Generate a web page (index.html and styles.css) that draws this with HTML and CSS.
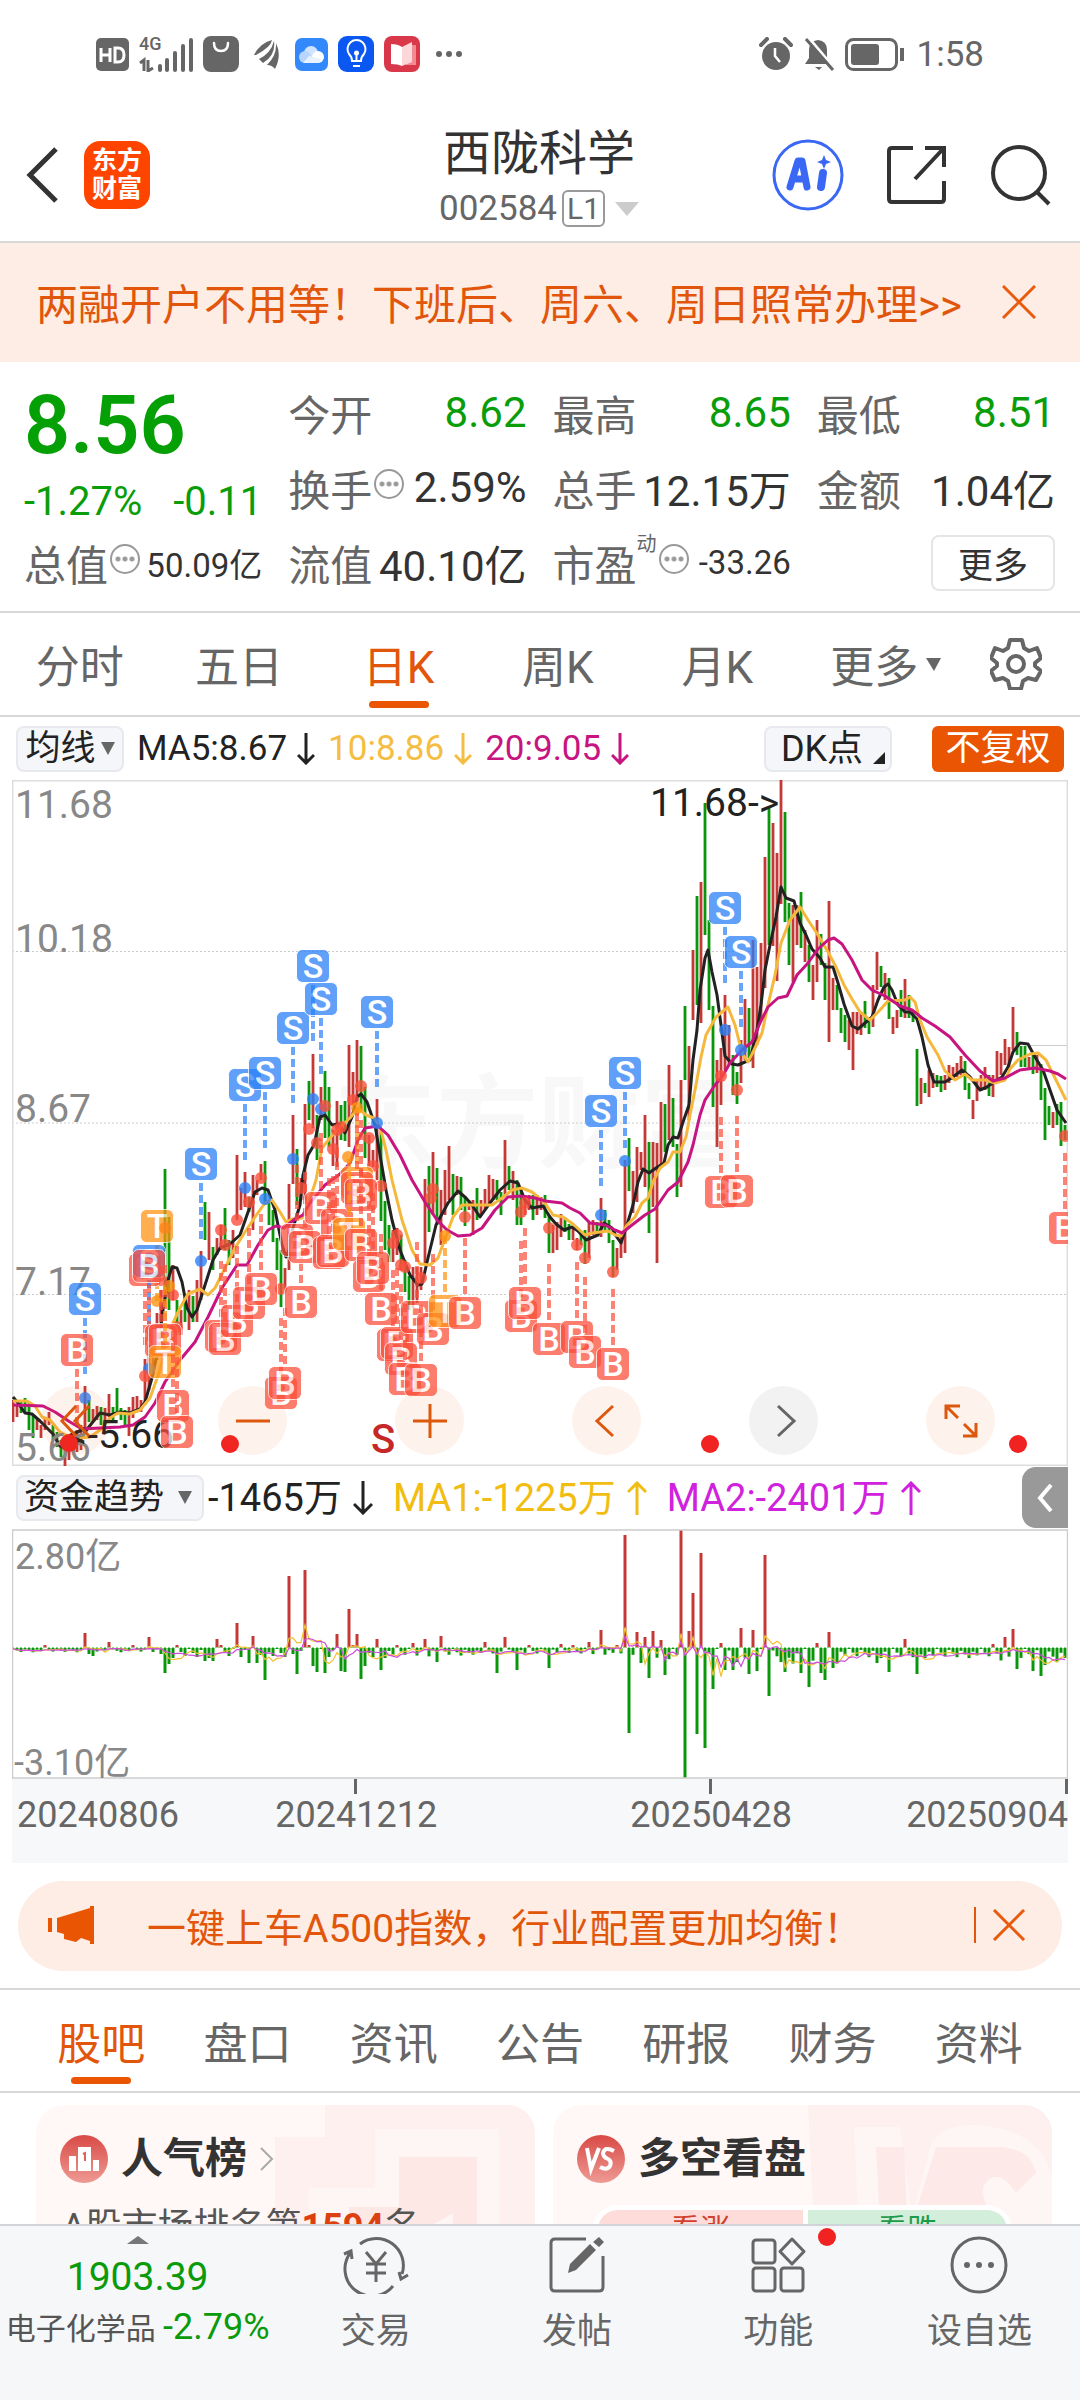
FILE: index.html
```html
<!DOCTYPE html>
<html lang="zh-CN">
<head>
<meta charset="utf-8">
<meta name="viewport" content="width=device-width, initial-scale=1">
<title>西陇科学 002584</title>
<link rel="stylesheet" href="styles.css">
</head>
<body>
<div class="app">
  <div class="status">
    <div class="status-side">
      <svg width="33" height="33" viewBox="0 0 33 33"><rect width="33" height="33" rx="5" fill="#666"/><path d="M5 10v14M14 10v14M5 17h9M19 10v14h3q6 0 6-7t-6-7z" fill="none" stroke="#fff" stroke-width="3"/></svg>
      <div class="signal">
        <span>4G</span>
        <svg width="54" height="34" viewBox="0 0 54 34"><path d="M1 25l4-3v11M9 22v11l5-3" fill="none" stroke="#666" stroke-width="3"/><path d="M21 28v4M28 22v10M36 15v17M44 8v24M52 2v30" stroke="#666" stroke-width="4" stroke-linecap="round"/></svg>
      </div>
      <svg width="36" height="36" viewBox="0 0 36 36"><rect width="36" height="36" rx="8" fill="#666"/><path d="M11 7q0 8 7 8t7-8" fill="none" stroke="#fff" stroke-width="2.5" stroke-linecap="round"/></svg>
      <svg class="gap-l" width="26" height="32" viewBox="0 0 26 32"><path d="M0 17Q6 5 18 2q-1 7-16 15zM5 21q12-6 15-18 2 14-11 22zM13 27Q23 17 22 5q6 12-1 26-3-4-8-4z" fill="#666"/></svg>
      <svg class="gap-l" width="33" height="33" viewBox="0 0 33 33"><rect width="33" height="33" rx="7" fill="#3389fb"/><circle cx="16" cy="15" r="7" fill="#cfe3ff"/><circle cx="10" cy="19" r="6" fill="#b7d5ff"/><circle cx="23" cy="19" r="6" fill="#fff"/><path d="M8 25h16l2-4-12-3z" fill="#e8f2ff"/></svg>
      <svg class="gap-s" width="36" height="36" viewBox="0 0 36 36"><rect width="36" height="36" rx="9" fill="#0a57f2"/><path d="M14 25q0-4-3-7a9 9 0 1 1 15 0q-3 3-3 7zM15 30h7" fill="none" stroke="#fff" stroke-width="2"/><path d="M18.500 18v7" stroke="#fff" stroke-width="2"/><circle cx="18.500" cy="17" r="2.500" fill="#fff"/></svg>
      <svg class="gap-s" width="36" height="36" viewBox="0 0 36 36"><rect width="36" height="36" rx="8" fill="#d9384a"/><path d="M22 9h10v20H22z" fill="#f28a94"/><path d="M7 8q7 0 11 3v19q-4-2-11-2z" fill="#fff"/><path d="M18 11l10-5v20l-10 4z" fill="#fcd7da"/></svg>
      <svg class="gap-l" width="28" height="8" viewBox="0 0 28 8"><g fill="#666"><circle cx="4" cy="4" r="3"/><circle cx="14" cy="4" r="3"/><circle cx="24" cy="4" r="3"/></g></svg>
    </div>
    <div class="status-side">
      <svg width="34" height="34" viewBox="0 0 34 34"><circle cx="17" cy="19" r="14" fill="#666"/><path d="M2 8l6-6M32 8l-6-6" stroke="#666" stroke-width="4" stroke-linecap="round"/><path d="M16 11v8l5 6" fill="none" stroke="#fff" stroke-width="2.500"/></svg>
      <svg class="gap-s" width="32" height="34" viewBox="0 0 32 34"><path d="M2 27l4-6v-8q0-9 9-10 9 1 9 10v8l4 6zM12 30h7l-3 3z" fill="#666"/><path d="M5 0l27 32" stroke="#fff" stroke-width="3"/><path d="M3 2l27 31" stroke="#666" stroke-width="3"/></svg>
      <svg class="gap-s" width="60" height="33" viewBox="0 0 60 33"><rect x="1.500" y="1.500" width="50" height="30" rx="7" fill="none" stroke="#666" stroke-width="3"/><rect x="6" y="6" width="28" height="21" rx="3" fill="#666"/><path d="M57 10v13" stroke="#666" stroke-width="4"/></svg>
      <span class="clock">1:58</span>
    </div>
  </div>

  <header class="top">
    <div class="top-left">
      <button class="icon-btn" aria-label="返回"><svg width="34" height="56" viewBox="0 0 34 56"><path d="M30 2L4 28l26 26" fill="none" stroke="#333" stroke-width="5"/></svg></button>
      <a class="brand" href="#">东方<br>财富</a>
    </div>
    <div class="top-title">
      <h1>西陇科学</h1>
      <div class="code"><span>002584</span><span class="level">L1</span><svg width="24" height="14" viewBox="0 0 24 14"><path d="M0 0h24L12 14z" fill="#ccc"/></svg></div>
    </div>
    <div class="top-right">
      <button class="icon-btn" aria-label="AI"><svg width="72" height="72" viewBox="0 0 72 72"><circle cx="36" cy="36" r="34" fill="none" stroke="#3a68f5" stroke-width="3"/><path d="M18 48l8-26h4l5 26M21 40h11" fill="none" stroke="#3a68f5" stroke-width="7" stroke-linecap="round" stroke-linejoin="round"/><path d="M51 34l-2 14" stroke="#3a68f5" stroke-width="8" stroke-linecap="round"/><path d="M52 16l2 5 5 2-5 2-2 5-2-5-5-2 5-2z" fill="#3a68f5"/></svg></button>
      <button class="icon-btn" aria-label="分享"><svg width="60" height="60" viewBox="0 0 60 60"><path d="M26 3H5q-3 0-3 3v48q0 3 3 3h49q3 0 3-3V36M38 3h19v19M56 4L28 34" fill="none" stroke="#333" stroke-width="4"/></svg></button>
      <button class="icon-btn" aria-label="搜索"><svg width="62" height="62" viewBox="0 0 62 62"><circle cx="29" cy="29" r="26" fill="none" stroke="#333" stroke-width="4"/><path d="M47 48l12 12" stroke="#333" stroke-width="4"/></svg></button>
    </div>
  </header>

  <main class="scroll">
    <div class="notice">
      <a href="#">两融开户不用等！下班后、周六、周日照常办理&gt;&gt;</a>
      <button class="icon-btn" aria-label="关闭"><svg width="34" height="34" viewBox="0 0 34 34"><path d="M1 1l32 32M33 1L1 33" stroke="#e85a0c" stroke-width="3"/></svg></button>
    </div>

    <section class="quote">
      <div class="price">
        <strong>8.56</strong>
        <div class="change"><span>-1.27%</span><span>-0.11</span></div>
      </div>
      <div class="cell"><span class="k">今开</span><span class="v down">8.62</span></div>
      <div class="cell"><span class="k">最高</span><span class="v down">8.65</span></div>
      <div class="cell"><span class="k">最低</span><span class="v down">8.51</span></div>
      <div class="cell"><span class="k">换手<i class="tip"></i></span><span class="v">2.59%</span></div>
      <div class="cell"><span class="k">总手</span><span class="v">12.15万</span></div>
      <div class="cell"><span class="k">金额</span><span class="v">1.04亿</span></div>
      <div class="cell"><span class="k">总值<i class="tip"></i></span><span class="v small">50.09亿</span></div>
      <div class="cell"><span class="k">流值</span><span class="v">40.10亿</span></div>
      <div class="cell"><span class="k">市盈<sup>动</sup><i class="tip"></i></span><span class="v small">-33.26</span></div>
      <div class="cell end"><button class="more">更多</button></div>
    </section>

    <nav class="periods">
      <a href="#">分时</a><a href="#">五日</a><a href="#" class="on">日K</a><a href="#">周K</a><a href="#">月K</a><a href="#" class="drop">更多<svg width="15" height="13" viewBox="0 0 15 13"><path d="M0 0h15L8 13z" fill="#666"/></svg></a>
      <button class="icon-btn" aria-label="设置"><svg width="52" height="52" viewBox="0 0 52 52"><path d="M20 2h12l2 8 5 3 8-3 4 10-6 5v3l6 5-5 9-8-2-5 3-2 8H20l-2-8-5-3-8 2-4-9 6-5v-3l-6-5 4-10 8 3 5-3z" fill="none" stroke="#666" stroke-width="4" stroke-linejoin="round"/><circle cx="26" cy="26" r="8" fill="none" stroke="#666" stroke-width="4"/></svg></button>
    </nav>

    <div class="legend">
      <button class="chip">均线<svg width="14" height="13" viewBox="0 0 14 13"><path d="M0 0h14L7 13z" fill="#666"/></svg></button>
      <span class="ma ink">MA5:8.67<svg width="18" height="32" viewBox="0 0 18 32"><path d="M9 0v30M1 22l8 8 8-8" fill="none" stroke="currentColor" stroke-width="3"/></svg></span>
      <span class="ma gold">10:8.86<svg width="18" height="32" viewBox="0 0 18 32"><path d="M9 0v30M1 22l8 8 8-8" fill="none" stroke="currentColor" stroke-width="3"/></svg></span>
      <span class="ma pink">20:9.05<svg width="18" height="32" viewBox="0 0 18 32"><path d="M9 0v30M1 22l8 8 8-8" fill="none" stroke="currentColor" stroke-width="3"/></svg></span>
      <button class="chip dk">DK点<svg width="12" height="12" viewBox="0 0 12 12"><path d="M12 0v12H0z" fill="#222"/></svg></button>
      <button class="adjust">不复权</button>
    </div>

    <div class="kline">
      <svg id="kline" viewBox="12 780 1056 686" role="img" aria-label="日K线图"></svg>
      <div class="tools">
        <button aria-label="最左"><svg width="34" height="34" viewBox="0 0 34 34"><path d="M17 2L3 17l14 15M30 2L16 17l14 15"/></svg></button>
        <button aria-label="缩小"><svg width="34" height="34" viewBox="0 0 34 34"><path d="M0 17h34"/></svg></button>
        <button aria-label="放大"><svg width="34" height="34" viewBox="0 0 34 34"><path d="M0 17h34M17 0v34"/></svg></button>
        <button aria-label="向左"><svg width="34" height="34" viewBox="0 0 34 34"><path d="M23 2L7 17l16 15"/></svg></button>
        <button aria-label="向右" class="off"><svg width="34" height="34" viewBox="0 0 34 34"><path d="M11 2l16 15-16 15"/></svg></button>
        <button aria-label="全屏"><svg width="34" height="34" viewBox="0 0 34 34"><path d="M2 15V2h14M3 3l11 11M32 19v13H19M31 31L20 20"/></svg></button>
      </div>
    </div>

    <div class="legend flow-legend">
      <button class="chip wide">资金趋势<svg width="14" height="13" viewBox="0 0 14 13"><path d="M0 0h14L7 13z" fill="#666"/></svg></button>
      <span class="ma ink">-1465万<svg width="20" height="34" viewBox="0 0 20 34"><path d="M10 0v32M1 23l9 9 9-9" fill="none" stroke="currentColor" stroke-width="3"/></svg></span>
      <span class="ma amber">MA1:-1225万<svg width="20" height="34" viewBox="0 0 20 34"><path d="M10 34V2M1 11l9-9 9 9" fill="none" stroke="currentColor" stroke-width="3"/></svg></span>
      <span class="ma violet">MA2:-2401万<svg width="20" height="34" viewBox="0 0 20 34"><path d="M10 34V2M1 11l9-9 9 9" fill="none" stroke="currentColor" stroke-width="3"/></svg></span>
      <button class="side" aria-label="展开"><svg width="16" height="28" viewBox="0 0 16 28"><path d="M14 1L3 14l11 13" fill="none" stroke="#fff" stroke-width="4"/></svg></button>
    </div>

    <div class="flow"><svg id="flow" viewBox="12 1528 1056 250" role="img" aria-label="资金趋势图"></svg></div>
    <div class="axis"><span class="first">20240806</span><span class="tick">20241212</span><span class="tick">20250428</span><span class="tick last">20250904</span></div>

    <div class="promo">
      <svg width="48" height="38" viewBox="0 0 48 38"><path d="M0 12h4v14H0zM9 12L42 2V0h4v38h-4v-3l-9-3-5 4-12-3v-5l-7-2z" fill="#ea5504"/></svg>
      <a href="#">一键上车A500指数，行业配置更加均衡！</a>
      <button class="icon-btn" aria-label="关闭"><svg width="34" height="32" viewBox="0 0 34 32"><path d="M2 1l30 30M32 1L2 31" stroke="#e85a0c" stroke-width="3"/></svg></button>
    </div>

    <nav class="sections">
      <a href="#" class="on">股吧</a><a href="#">盘口</a><a href="#">资讯</a><a href="#">公告</a><a href="#">研报</a><a href="#">财务</a><a href="#">资料</a>
    </nav>

    <div class="cards">
      <article class="card">
        <svg class="card-art" width="260" height="200" viewBox="0 0 260 200"><path d="M50 0h210v200H0V32h50z" fill="#fdf0ee"/><path d="M100 24h124v176H34V83h66z" fill="#fef6f4"/><path d="M124 52h78v148h-24v-92l-24 14v78H74v-98h50z" fill="#fde8e5"/></svg>
        <h2><svg width="48" height="48" viewBox="0 0 48 48"><defs><linearGradient id="badge" x2="0" y2="1"><stop stop-color="#d94a46"/><stop offset="1" stop-color="#ee9a94"/></linearGradient></defs><circle cx="24" cy="24" r="24" fill="url(#badge)"/><path d="M9 21h7v15H9zM18 12h13v24H18zM33 25h6v11h-6z" fill="#fff"/><path d="M23 19l2-1v8" fill="none" stroke="#e0605a" stroke-width="2"/></svg>人气榜<svg class="arrow" width="14" height="24" viewBox="0 0 14 24"><path d="M1 1l11 11L1 23" fill="none" stroke="#aaa" stroke-width="2"/></svg></h2>
        <p>A股市场排名第<b>1594</b>名</p>
      </article>
      <article class="card">
        <svg class="card-art" width="244" height="200" viewBox="0 0 244 200"><path d="M0 0h244v200H10z" fill="#fdf0ee"/><path d="M46 22h46l12 90 20-76q20-22 60-14 50 8 60 50v128H54z" fill="#fef6f4"/><path d="M68 42h28l4 90 28-90h60q34 0 40 26l-20 20q-18-28-32-8-6 20 24 44 18 30 10 76h-50l-20-60-20 60H76z" fill="#fdeae8"/></svg>
        <h2><svg width="48" height="48" viewBox="0 0 48 48"><circle cx="24" cy="24" r="24" fill="url(#badge)"/><path d="M10 13l4 21 8-21M37 16q-9-5-11 2 0 4 5 6 4 2 2 7-3 5-10 1" fill="none" stroke="#fff" stroke-width="4"/></svg>多空看盘</h2>
        <div class="vote"><button>看涨</button><button>看跌</button></div>
      </article>
    </div>
  </main>

  <footer class="bottom">
    <a class="sector" href="#">
      <svg width="22" height="8" viewBox="0 0 22 8"><path d="M0 8L11 0l11 8z" fill="#777"/></svg>
      <strong>1903.39</strong>
      <span>电子化学品 <em>-2.79%</em></span>
    </a>
    <a href="#"><svg width="66" height="58" viewBox="0 0 66 58"><path d="M17 8A27 27 0 0 1 59 38M50 50A27 27 0 0 1 8 16M1 18l7-3 1 8M65 39l-7 4-2-7M23 16l10 12 10-12M33 28v18M23 28h20M23 37h20" fill="none" stroke="#666" stroke-width="3"/></svg>交易</a>
    <a href="#"><svg width="58" height="58" viewBox="0 0 58 58"><path d="M38 3H7q-4 0-4 4v44q0 4 4 4h44q4 0 4-4V20" fill="none" stroke="#666" stroke-width="3"/><path d="M20 37l2-9 20-20 6 6-20 20zM45 6l6-5 5 5-5 5z" fill="#666"/></svg>发帖</a>
    <a href="#" class="dot"><svg width="58" height="58" viewBox="0 0 58 58"><g fill="none" stroke="#666" stroke-width="3"><rect x="4" y="4" width="22" height="23" rx="3"/><rect x="4" y="32" width="22" height="23" rx="3"/><rect x="32" y="32" width="22" height="23" rx="3"/><path d="M43 3l12 12.500L43 28 31 15.500z" stroke-linejoin="round"/></g></svg>功能</a>
    <a href="#"><svg width="58" height="58" viewBox="0 0 58 58"><circle cx="29" cy="29" r="27" fill="none" stroke="#666" stroke-width="3"/><g fill="#666"><circle cx="17" cy="29" r="3"/><circle cx="29" cy="29" r="3"/><circle cx="41" cy="29" r="3"/></g></svg>设自选</a>
  </footer>
</div>
<script src="chart.js"></script>
</body>
</html>
```
FILE: styles.css
```css
* { box-sizing: border-box; }
body { margin: 0; background: #fff; color: #333; font-family: Roboto, "Noto Sans CJK SC", sans-serif; }
a { color: inherit; text-decoration: none; }
button { margin: 0; padding: 0; border: 0; background: none; color: inherit; font: inherit; cursor: pointer; }
svg { display: block; flex: none; }
h1, h2, p { margin: 0; }

.app { display: flex; flex-direction: column; height: 100vh; overflow: hidden; }
.scroll { flex: 1; min-height: 0; overflow-y: auto; scrollbar-width: none; }
.icon-btn { display: flex; align-items: center; justify-content: center; }

/* Status bar */
.status { display: flex; justify-content: space-between; flex: none; height: 108px; padding: 0 96px; color: #666; }
.status-side { display: flex; align-items: center; }
.signal { position: relative; margin: 0 10px; padding-top: 2px; }
.signal span { position: absolute; left: 0; top: -2px; font-size: 18px; line-height: 20px; font-weight: 500; }
.gap-l { margin-left: 15px; }
.gap-s { margin-left: 10px; }
.clock { margin-left: 12px; font-size: 35px; }

/* Title bar */
.top { display: grid; grid-template-columns: 1fr auto 1fr; align-items: center; flex: none; height: 135px; padding: 0 28px 0 26px; border-bottom: 2px solid #d8d8d8; }
.top-left { display: flex; align-items: center; gap: 24px; }
.brand { width: 66px; height: 68px; padding: 6px 0; border-radius: 16px; background: #ff4400; color: #fff; font-size: 25px; line-height: 28px; font-weight: 700; text-align: center; }
.top-title { padding-top: 2px; text-align: center; }
.top-title h1 { font-size: 48px; line-height: 66px; font-weight: 400; }
.code { display: flex; align-items: center; justify-content: center; gap: 5px; color: #666; font-size: 35px; line-height: 44px; }
.level { height: 37px; padding: 0 3px; border: 2px solid #999; border-radius: 6px; font-size: 30px; line-height: 34px; }
.code svg { margin-left: 5px; }
.top-right { display: flex; align-items: center; justify-content: flex-end; gap: 43px; }

/* Notice */
.notice { display: flex; align-items: center; justify-content: space-between; height: 119px; padding: 0 44px 2px 36px; background: #fdede4; color: #e2560b; font-size: 42px; }

/* Quote */
.quote { display: grid; grid-template-columns: repeat(4, 1fr); grid-auto-rows: 75px; column-gap: 26px; padding: 13px 25px 11px 24px; border-bottom: 2px solid #d8d8d8; }
.price { grid-row: span 2; color: #0a9d0a; }
.price strong { display: block; font-size: 81px; line-height: 102px; font-weight: 600; color: #05a005; }
.change { display: flex; justify-content: space-between; font-size: 40px; line-height: 50px; }
.cell { display: flex; align-items: center; justify-content: space-between; font-size: 42px; white-space: nowrap; }
.k { display: flex; align-items: center; color: #666; }
.k sup { align-self: flex-start; font-size: 20px; line-height: 24px; }
.v { color: #333; }
.v.small { font-size: 33px; }
.v.down { color: #0a9d0a; }
.tip { width: 30px; height: 30px; margin: 0 0 8px 2px; border: 2px solid #999; border-radius: 50%; background: radial-gradient(circle, #999 2px, transparent 3px) center / 7px 20px repeat-x content-box; padding: 0 2px; }
.end { justify-content: flex-end; }
.more { width: 124px; height: 56px; border: 2px solid #e5e5e5; border-radius: 8px; font-size: 35px; }

/* Period tabs */
.periods { display: grid; grid-template-columns: repeat(6, 4fr) 3fr; height: 104px; padding-right: 4px; border-bottom: 2px solid #d8d8d8; color: #666; font-size: 44px; }
.periods a, .sections a { position: relative; display: flex; align-items: center; justify-content: center; }
.periods .drop { gap: 8px; padding-left: 18px; }
.periods .on, .sections .on { color: #e2560b; }
.on::after { content: ""; position: absolute; bottom: 7px; left: 50%; width: 60px; height: 7px; margin-left: -30px; border-radius: 4px; background: #ea5504; }

/* Chart legends */
.legend { display: flex; align-items: center; height: 63px; padding: 0 16px; font-size: 35px; }
.chip { display: flex; align-items: center; justify-content: center; gap: 5px; width: 108px; height: 46px; border: 2px solid #e8e9ee; border-radius: 8px; background: #f5f6f9; color: #222; font-size: 35px; line-height: 40px; }
.ma { display: flex; align-items: center; gap: 10px; margin-left: 13px; white-space: nowrap; }
.chip.dk { gap: 10px; width: 128px; margin-left: auto; font-size: 36px; }
.dk svg { align-self: flex-end; margin: 0 -10px 6px 0; }
.adjust { width: 132px; height: 46px; margin-left: 40px; border-radius: 6px; background: #ea5504; color: #fff; font-size: 35px; line-height: 44px; }
.ink { color: #222; }
.gold { color: #f5bd42; }
.pink { color: #c81480; }
.amber { color: #f2bd12; }
.violet { color: #d022dc; }
.flow-legend { padding-right: 12px; font-size: 38px; }
.flow-legend .ma { gap: 11px; height: 46px; margin-left: 20px; line-height: 42px; }
.flow-legend .ink { margin-left: 4px; }
.chip.wide { gap: 14px; width: 188px; padding-right: 4px; }
.side { display: flex; align-items: center; justify-content: center; width: 46px; height: 61px; margin-left: auto; border-radius: 14px 0 0 14px; background: #999; }

/* Candles */
.kline { position: relative; margin: 0 12px; }
.kline > svg, .flow > svg { width: 100%; height: auto; }
.tools { position: absolute; left: 0; right: 0; bottom: 11px; display: flex; justify-content: space-between; padding: 0 73px 0 29px; }
.tools button { display: flex; align-items: center; justify-content: center; width: 69px; height: 69px; border-radius: 50%; background: rgba(240, 90, 10, .08); }
.tools path { fill: none; stroke: #dc580c; stroke-width: 3; }
.tools .off { background: rgba(0, 0, 0, .05); }
.tools .off path { stroke: #666; }
.flow { margin: 0 12px; }
.lbl { font-size: 39px; fill: #888; }
.lbl.dark { fill: #222; }
.lbl.amount { font-size: 36px; }
.mark { font-size: 34px; font-weight: 500; fill: #fff; text-anchor: middle; }
.sell { font-size: 40px; font-weight: 500; fill: #c62828; text-anchor: middle; }
.wm { font-size: 102px; font-weight: 700; fill: #f8f8f8; }

.axis { display: grid; grid-template-columns: 164fr 356fr 356fr 180fr; height: 84px; margin: 0 12px; background: #f7f8fa; color: #666; font-size: 36px; line-height: 42px; }
.axis span { position: relative; padding-top: 15px; text-align: center; }
.axis .first { padding-left: 5px; text-align: left; }
.axis .last { text-align: right; }
.tick::before { content: ""; position: absolute; top: 0; left: 50%; width: 3px; height: 15px; margin-left: -2px; background: #666; }
.tick.last::before { left: auto; right: 0; }

/* Promo */
.promo { display: flex; align-items: center; height: 90px; margin: 18px 18px 17px; padding: 0 36px 2px 30px; border-radius: 45px; background: #fdede4; color: #e2560b; font-size: 39px; }
.promo a { flex: 1; margin-left: 51px; }
.promo .icon-btn { height: 36px; padding-left: 16px; border-left: 2px solid #e2560b; }

.sections { display: grid; grid-template-columns: repeat(7, 1fr); height: 105px; padding: 0 28px; border-top: 2px solid #d8d8d8; border-bottom: 2px solid #d8d8d8; color: #666; font-size: 44px; }

.cards { display: grid; grid-template-columns: 1fr 1fr; gap: 18px; padding: 12px 28px 10px 36px; }
.card { position: relative; height: 240px; padding: 28px 24px; border-radius: 28px; background: #fff8f6; overflow: hidden; }
.card h2 { position: relative; display: flex; align-items: center; gap: 13px; font-size: 42px; line-height: 52px; color: #333; }
.card-art { position: absolute; right: 0; top: 0; }
.card p { position: relative; margin-top: 20px; padding-left: 2px; font-size: 36px; line-height: 44px; color: #555; }
.card b { color: #dc4010; }
.vote { position: relative; display: grid; grid-template-columns: 1fr 1fr; margin: 20px 16px; border: 5px solid #fff; border-radius: 32px; overflow: hidden; font-size: 30px; line-height: 40px; }
.vote button { background: #fddcd9; color: #d0402c; }
.vote button + button { border-left: 5px solid #fff; background: #d3eedb; color: #1f9a4a; }

/* Bottom bar */
.bottom { display: grid; grid-template-columns: 275fr repeat(4, 201fr); flex: none; height: 176px; padding-top: 10px; border-top: 2px solid #d0d3d8; background: #f6f7f9; color: #666; font-size: 35px; line-height: 50px; }
.bottom a { position: relative; display: flex; flex-direction: column; align-items: center; gap: 13px; white-space: nowrap; }
.bottom .sector { gap: 0; color: #555; font-size: 30px; }
.sector strong { margin-top: 8px; color: #0a9a0a; font-size: 39px; font-weight: 400; line-height: 50px; }
.sector em { color: #0a9a0a; font-size: 36px; font-style: normal; }
.dot::after { content: ""; position: absolute; top: -8px; left: 50%; width: 18px; height: 18px; margin-left: 40px; border-radius: 50%; background: #f02222; }
```
FILE: chart.js
```js
(function () {
  var NS = 'http://www.w3.org/2000/svg';
  function add(parent, name, attrs, text) {
    var el = document.createElementNS(NS, name);
    for (var k in attrs) el.setAttribute(k, attrs[k]);
    if (text) el.textContent = text;
    parent.appendChild(el);
    return el;
  }
  var RED = '#c43836', GREEN = '#0a960a';

  /* Each candle is [direction][top],[bottom]; one every 4 units from x = 13. */
  var candles = ('r1400,1422 r1405,1417 g1402,1413 g1398,1412 g1402,1430 g1415,1438 r1418,1430 r1425,1438 r1418,1430 r1412,1425 g1425,1440 g1432,1447 g1440,1457 r1445,1466 r1440,1460 r1435,1452 r1430,1452 r1425,1450 r1386,1430 g1400,1422 ' +
    'r1409,1422 r1406,1420 g1407,1425 r1408,1420 r1394,1417 g1407,1422 g1388,1413 g1408,1420 g1410,1425 r1407,1436 r1397,1418 r1396,1410 r1400,1412 r1359,1405 r1345,1390 r1328,1375 r1313,1360 r1290,1330 g1169,1300 g1217,1310 ' +
    'r1265,1300 g1300,1335 r1310,1335 g1297,1322 r1290,1330 g1296,1322 r1280,1322 r1251,1300 g1202,1240 r1212,1260 g1247,1270 r1238,1255 r1225,1250 g1208,1250 g1240,1265 r1230,1258 r1155,1220 r1188,1210 r1172,1207 g1197,1212 ' +
    'r1175,1230 r1180,1195 r1164,1180 g1161,1205 g1200,1225 g1210,1242 g1238,1270 g1250,1307 r1268,1290 r1184,1270 r1115,1184 g1149,1205 r1178,1200 r1104,1200 g1081,1120 r1054,1128 g1115,1160 r1087,1120 g1071,1138 g1087,1147 ' +
    'r1130,1166 r1101,1167 g1105,1140 g1101,1141 r1045,1147 r1072,1105 r1040,1100 g1046,1110 g1087,1158 r1135,1167 r1150,1167 r1099,1180 g1131,1221 g1201,1250 g1225,1262 r1230,1262 r1228,1255 g1235,1270 g1260,1292 g1276,1310 ' +
    'r1267,1308 r1267,1303 r1267,1290 r1179,1265 g1166,1232 r1152,1215 g1168,1225 r1190,1245 r1170,1215 r1146,1200 g1174,1215 r1176,1195 g1177,1210 g1198,1226 r1200,1210 r1200,1235 g1188,1220 r1200,1215 r1189,1210 r1175,1205 ' +
    'r1179,1200 g1180,1200 g1192,1215 r1140,1197 g1166,1190 r1171,1200 g1180,1225 g1190,1225 r1195,1215 r1195,1210 g1195,1220 r1195,1215 r1197,1210 g1195,1218 g1215,1253 r1225,1253 r1222,1250 r1214,1237 g1217,1232 g1224,1240 ' +
    'r1228,1240 r1238,1250 g1232,1245 g1230,1264 r1222,1258 r1220,1235 g1222,1235 r1198,1237 g1210,1232 g1220,1243 g1240,1277 r1248,1270 r1235,1258 r1160,1253 g1138,1191 r1171,1213 r1147,1202 r1152,1170 r1115,1187 g1142,1233 ' +
    'r1142,1207 r1143,1263 r1102,1165 g1104,1152 r1065,1140 g1098,1147 g1144,1197 r1080,1187 g1006,1080 r1046,1120 r950,1020 g896,1005 r882,1023 g803,935 g920,1010 g1006,1107 r1060,1147 r1048,1105 r995,1070 r1025,1065 ' +
    'g1055,1095 g1072,1104 r1040,1083 r999,1060 g1008,1058 r940,1068 r967,1045 r943,1020 r857,988 g808,945 r823,946 r853,981 r780,904 g812,922 g903,965 r905,982 r905,945 g892,948 r930,962 g945,982 ' +
    'r965,1000 r920,982 g934,965 g963,1000 r901,1042 r978,1010 g985,1010 g1008,1033 g1015,1042 r1020,1050 r1012,1070 r1012,1034 r1012,1035 g1001,1028 g1017,1034 r985,1027 r952,990 g966,987 r973,1000 g978,1019 ' +
    'r1017,1034 r1010,1028 g990,1017 r979,1018 g995,1018 g1010,1022 g1049,1106 r1078,1104 g1083,1093 r1070,1097 r1073,1088 g1075,1087 g1076,1092 r1075,1090 r1065,1083 r1067,1080 r1063,1077 r1056,1075 g1061,1090 g1083,1099 ' +
    'r1100,1119 r1080,1101 r1075,1090 r1067,1090 g1075,1096 r1075,1097 r1051,1083 r1053,1075 r1039,1065 r1047,1070 r1007,1050 g1032,1055 g1046,1067 g1046,1067 r1057,1068 g1053,1074 r1055,1073 g1064,1100 g1088,1140 g1106,1125 ' +
    'r1112,1128 g1104,1125 g1102,1146 g1125,1140').split(' ');

  var ma5 = '13,1397 18,1403 25,1413 32,1414 40,1421 47,1428 53,1434 60,1446 68,1449 80,1440 88,1428 100,1413 110,1415 120,1412 130,1413 140,1409 145,1402 152,1378 158,1350 163,1310 168,1280 172,1267 177,1268 182,1282 187,1308 192,1317 197,1310 205,1285 213,1260 220,1248 230,1244 240,1235 247,1215 255,1192 262,1188 268,1190 275,1210 282,1245 286,1257 289,1250 293,1228 300,1205 303,1175 308,1155 314,1145 320,1117 325,1115 332,1125 338,1124 345,1133 352,1117 357,1097 361,1094 367,1102 375,1125 380,1155 386,1190 392,1220 400,1250 410,1275 418,1285 422,1284 428,1258 436,1225 448,1203 458,1191 466,1198 472,1205 480,1217 490,1203 500,1190 510,1181 518,1183 525,1200 532,1208 543,1206 550,1217 556,1224 564,1230 572,1227 578,1231 586,1240 598,1235 604,1223 612,1228 616,1236 621,1243 627,1225 633,1205 638,1182 643,1169 649,1173 656,1168 664,1163 668,1145 673,1137 678,1138 683,1122 689,1105 693,1060 697,1030 700,990 705,958 708,950 712,972 717,995 721,1025 725,1056 732,1064 738,1065 745,1062 750,1060 757,1030 761,1005 765,970 770,945 776,917 781,887 786,898 794,901 800,923 806,935 812,949 820,958 825,967 833,967 838,983 844,1004 852,1026 858,1029 865,1023 872,1017 878,1000 884,987 888,984 892,990 898,1005 905,1012 910,1012 917,1019 922,1037 928,1065 934,1082 945,1082 953,1077 962,1070 970,1077 980,1090 987,1087 994,1082 1002,1077 1008,1067 1013,1052 1020,1043 1028,1044 1035,1057 1043,1070 1050,1090 1057,1110 1066,1123';
  var ma10 = '13,1401 27,1401 35,1406 42,1417 50,1420 60,1432 68,1436 80,1438 90,1437 100,1430 110,1418 118,1413 130,1414 140,1410 150,1398 160,1370 168,1335 172,1325 180,1308 188,1294 200,1289 208,1295 215,1288 225,1268 235,1248 245,1232 255,1217 265,1203 272,1200 280,1212 286,1222 292,1219 302,1218 308,1205 316,1180 322,1148 330,1138 340,1127 350,1118 358,1108 366,1115 374,1118 380,1127 386,1150 392,1180 402,1220 412,1250 420,1264 430,1265 438,1258 446,1236 453,1217 462,1205 475,1205 492,1205 502,1198 512,1190 522,1188 532,1192 545,1203 553,1215 563,1217 573,1224 585,1235 592,1233 608,1231 615,1235 621,1236 627,1225 635,1217 642,1203 648,1198 653,1182 660,1168 668,1162 673,1152 680,1152 686,1137 690,1115 696,1085 701,1057 706,1035 716,1017 728,1007 735,1025 742,1053 748,1062 754,1050 762,1033 768,1005 775,975 781,943 790,920 800,907 808,920 818,935 828,952 836,967 844,985 852,999 860,1012 870,1020 880,1010 888,1001 905,1000 910,997 915,1002 920,1020 927,1037 938,1055 945,1071 955,1080 965,1074 972,1080 985,1080 995,1083 1005,1080 1010,1069 1018,1060 1030,1054 1038,1053 1046,1060 1056,1080 1066,1100';
  var ma20 = '13,1405 43,1406 55,1412 70,1422 82,1429 100,1428 120,1427 133,1425 145,1417 155,1403 165,1382 180,1360 195,1342 208,1317 222,1288 237,1265 247,1265 258,1245 268,1230 276,1226 284,1228 295,1219 303,1215 310,1203 325,1185 340,1174 350,1163 358,1140 365,1128 378,1126 388,1135 400,1155 412,1180 425,1202 437,1220 447,1230 458,1236 470,1235 482,1228 495,1210 508,1197 520,1196 535,1198 545,1201 562,1203 570,1208 580,1213 590,1223 605,1225 615,1230 622,1233 632,1225 645,1215 655,1209 668,1190 678,1182 688,1162 693,1145 700,1115 705,1100 715,1085 722,1077 730,1063 742,1050 752,1042 760,1023 768,1007 778,998 787,996 797,975 808,963 818,949 828,940 834,938 842,944 852,960 862,980 872,990 885,996 900,1006 912,1010 922,1018 935,1026 950,1037 965,1055 980,1071 993,1081 1005,1078 1020,1070 1035,1068 1050,1071 1058,1074 1066,1079';

  var k = document.getElementById('kline');
  add(k, 'text', { x: 334, y: 1160, 'class': 'wm' }, '东方财富');
  [951.5, 1123, 1294.5].forEach(function (y) {
    add(k, 'path', { d: 'M12 ' + y + 'H1067', stroke: '#ccc', 'stroke-dasharray': '2 2' });
  });
  add(k, 'path', { d: 'M1028 1045.5H1067', stroke: '#ccc' });
  add(k, 'rect', { x: 12.5, y: 780.5, width: 1055, height: 685, fill: 'none', stroke: '#ddd', 'stroke-width': 2 });
  candles.forEach(function (c, i) {
    var r = c.slice(1).split(','), x = 13 + 4 * i;
    add(k, 'path', { d: 'M' + x + ' ' + r[0] + 'V' + r[1], stroke: c[0] === 'r' ? RED : GREEN, 'stroke-width': 2.8 });
  });
  [[ma5, '#222'], [ma10, '#f5b83c'], [ma20, '#c81480']].forEach(function (m) {
    add(k, 'polyline', { points: m[0], fill: 'none', stroke: m[1], 'stroke-width': 3, 'stroke-linejoin': 'round' });
  });
  [[818, '11.68'], [952, '10.18'], [1122, '8.67'], [1295, '7.17'], [1461, '5.66']].forEach(function (t) {
    add(k, 'text', { x: 15, y: t[0], 'class': 'lbl' }, t[1]);
  });
  add(k, 'text', { x: 650, y: 816, 'class': 'lbl dark' }, '11.68->');
  add(k, 'text', { x: 174, y: 1448, 'class': 'lbl dark', 'text-anchor': 'end' }, '<-5.66');
  [[69, 1443], [230, 1444], [710, 1444], [1018, 1444]].forEach(function (p) {
    add(k, 'circle', { cx: p[0], cy: p[1], r: 9, fill: '#f02222' });
  });
  add(k, 'text', { x: 383, y: 1453, 'class': 'sell' }, 'S');

  var tone = { S: '#2a80f8', B: '#fb4f3c', T: '#ff9412' };
  var dots = {
    S: '85,1398 149,1369 201,1261 245,1188 265,1199 293,1159 313,1099 321,1109 377,1123 601,1215 625,1161 725,1030 741,1050',
    B: '145,1376 165,1228 173,1295 177,1327 221,1230 225,1245 237,1220 249,1202 261,1178 281,1289 301,1188 309,1129 317,1143 325,1106 333,1149 337,1130 341,1127 361,1086 353,1100 369,1138 373,1166 381,1186 393,1243 397,1235 401,1265 405,1267 421,1278 433,1189 431,1198 465,1217 521,1212 525,1203 549,1228 577,1245 585,1258 613,1272 721,1076 737,1090 1065,1136',
    T: '157,1301 169,1286 357,1108 348,1157 445,1236'
  };
  for (var kind in dots) dots[kind].split(' ').forEach(function (p) {
    p = p.split(',');
    add(k, 'circle', { cx: p[0], cy: p[1], r: 6, fill: tone[kind], opacity: .8 });
  });
  /* Trade marks: letter, x, y, and the side on which the dashed lead hangs. */
  ('S85,1299,d S201,1164,d S245,1085,d S265,1073,d S293,1028,d S313,966,d S321,999,d S377,1012,d S601,1111,d S625,1073,d S725,908,d S741,952,d ' +
   'B77,1350,d T157,1226,d B145,1270,d S149,1261,d B149,1266,d B161,1341,u B165,1340,u T165,1362,u B173,1406,u B177,1432,u B221,1336,u B225,1339,u B237,1321,u B249,1303,u B261,1289,u B281,1393,u B285,1383,u B301,1302,u ' +
   'B297,1240,u B305,1247,u B321,1208,u B337,1225,u B329,1253,u B333,1251,u T357,1183,u B357,1188,u B361,1195,u T349,1234,u B361,1245,u B369,1276,u B373,1268,u B381,1309,u B393,1345,u B397,1343,u B401,1359,u B405,1379,u B417,1317,u B433,1329,u B421,1380,u T445,1311,u B465,1313,u ' +
   'B521,1316,u B525,1303,u B549,1339,u B577,1337,u B585,1352,u B613,1364,u B721,1192,u B737,1191,u B1065,1228,u').split(' ').forEach(function (m) {
    var t = m[0], v = m.slice(1).split(','), x = +v[0], y = +v[1];
    var from = v[2] === 'd' ? y + 19 : y - 75;
    add(k, 'path', { d: 'M' + x + ' ' + from + 'v56', stroke: tone[t], 'stroke-width': 4, 'stroke-dasharray': '8 4', opacity: .7 });
    var g = add(k, 'g', { opacity: .74 });
    add(g, 'rect', { x: x - 16.5, y: y - 16.5, width: 33, height: 33, rx: 6, fill: tone[t], stroke: '#fff' });
    add(g, 'text', { x: x, y: y + 12, 'class': 'mark' }, t);
  });

  /* Capital flow: bar ends by x; the days between are small outflows. */
  var ends = {};
  ('85,1632 109,1641 149,1636 218,1638 237,1622 253,1635 289,1575 305,1569 337,1633 349,1608 357,1633 377,1638 413,1642 425,1638 441,1635 505,1636 589,1641 601,1629 625,1534 637,1631 645,1636 653,1630 661,1639 681,1529 689,1630 693,1592 701,1552 741,1627 753,1629 765,1554 829,1631 905,1638 1005,1636 1013,1628 993,1643 721,1642 817,1642 561,1643 485,1641 ' +
   '89,1653 93,1655 165,1672 169,1663 173,1657 205,1660 213,1660 249,1662 257,1662 265,1679 297,1673 313,1665 317,1671 325,1672 341,1670 345,1671 361,1678 365,1665 381,1669 437,1661 497,1672 517,1669 549,1667 629,1732 641,1662 649,1677 665,1674 685,1777 697,1733 705,1747 713,1688 725,1669 733,1669 749,1673 757,1670 769,1695 785,1671 801,1672 809,1686 821,1672 825,1679 833,1667 889,1671 877,1662 917,1673 1017,1668 1033,1670 1041,1675 1045,1664').split(' ').forEach(function (p) {
    p = p.split(',');
    ends[Math.round((p[0] - 13) / 4)] = +p[1];
  });
  var f = document.getElementById('flow'), zero = 1647, vals = [];
  for (var i = 0; i < 264; i++) {
    var x = 13 + 4 * i, noise = (i * 37 % 11) / 11;
    var depth = x < 160 ? 4 : x < 400 ? 11 : x < 470 ? 9 : x < 620 ? 7 : x < 840 ? 16 : x < 1000 ? 10 : 14;
    var end = ends[i] || (noise > .85 && x < 620 ? zero - 3 : zero + 1 + noise * depth);
    vals.push(end - zero);
    add(f, 'path', { d: 'M' + x + ' ' + zero + 'V' + end, stroke: end < zero ? RED : GREEN, 'stroke-width': 3 });
  }
  add(f, 'path', { d: 'M12 1646.500H1067', stroke: '#7fe07f', 'stroke-dasharray': '2 2' });
  [[5, '#f0c030'], [10, '#d04adc']].forEach(function (m) {
    var pts = vals.map(function (v, i) {
      var s = vals.slice(Math.max(0, i - m[0] + 1), i + 1);
      return (13 + 4 * i) + ',' + (zero + s.reduce(function (a, b) { return a + b; }, 0) / s.length).toFixed(1);
    });
    add(f, 'polyline', { points: pts.join(' '), fill: 'none', stroke: m[1], 'stroke-width': 1.2 });
  });
  add(f, 'rect', { x: 12.5, y: 1529, width: 1055, height: 248, fill: 'none', stroke: '#ccc', 'stroke-width': 1.5 });
  add(f, 'text', { x: 15, y: 1568, 'class': 'lbl amount' }, '2.80亿');
  add(f, 'text', { x: 14, y: 1774, 'class': 'lbl amount' }, '-3.10亿');
})();
```
